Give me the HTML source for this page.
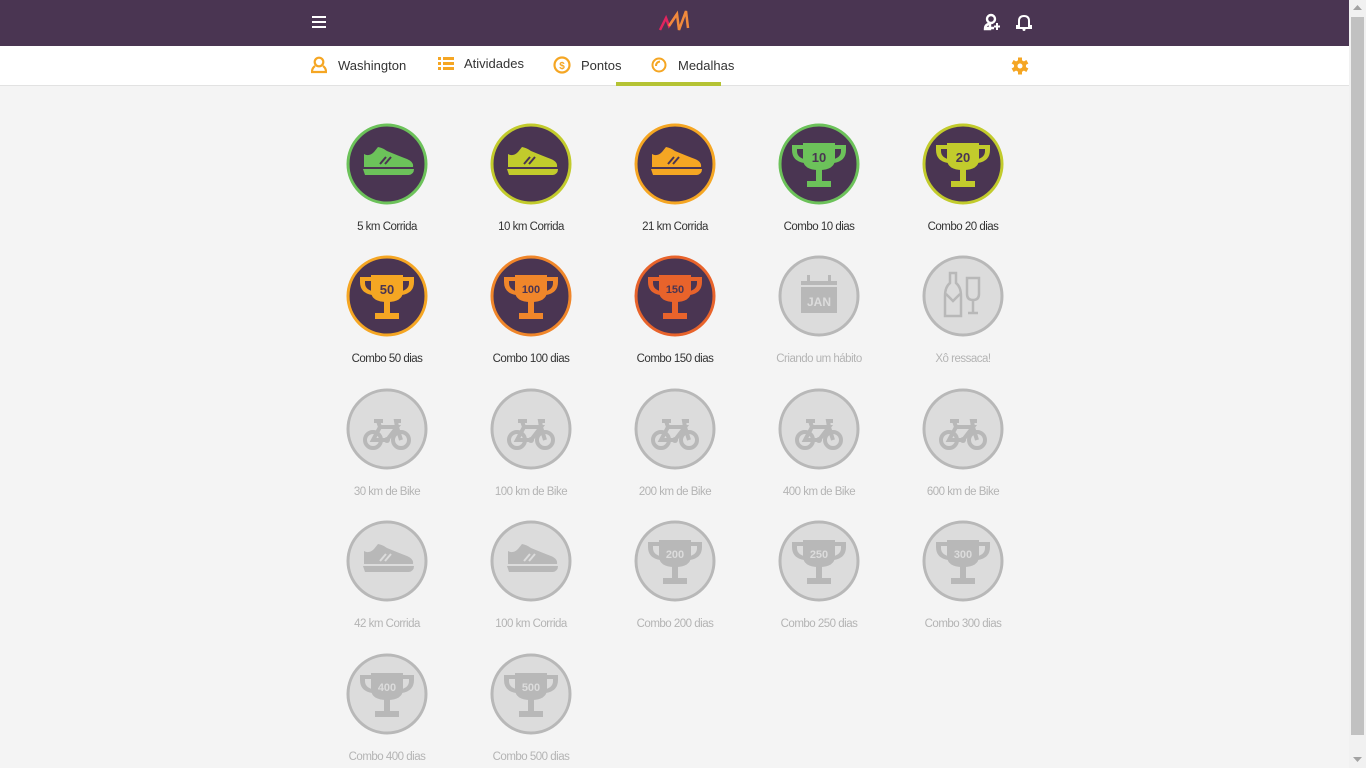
<!DOCTYPE html>
<html><head><meta charset="utf-8"><style>
*{margin:0;padding:0;box-sizing:border-box}
body{width:1366px;height:768px;overflow:hidden;background:#f4f4f4;font-family:"Liberation Sans",sans-serif;position:relative}
.hdr{position:absolute;left:0;top:0;width:1349px;height:46px;background:#4a3552}
.nav{position:absolute;left:0;top:46px;width:1349px;height:40px;background:#fff;border-bottom:1px solid #e2e2e2}
.ni{position:absolute;top:12px;font-size:13px;color:#333}
.sb{position:absolute;left:1349px;top:0;width:17px;height:768px;background:#f1f1f1}
.th{position:absolute;left:1351px;top:17px;width:13px;height:718px;background:#c1c1c1}
.m{position:absolute;width:144px;text-align:center}
.m svg{display:block;margin:0 auto}
.m div{font-size:11.5px;letter-spacing:-0.5px;color:#333;margin-top:16px}
.m.g div{color:#b4b4b4}
</style></head><body>
<svg width="0" height="0" style="position:absolute">
<defs>
<g id="shoe"><path d="M17 43 L17 30 Q22 33 27 28 L31 23 Q36 24 40 27 Q52 32 60 35 Q67 38 66 43 Z"/><path d="M16 45 L67 45 Q67 50 62 51 L18 51 Z"/></g>
<g id="cup"><path d="M24 19 H56 V35 Q56 46 40 46 Q24 46 24 35 Z"/><path d="M24 21 H13 V26 Q13 37 25 39 V35 Q18 33 18 27 V25 H24 Z"/><path d="M56 21 H67 V26 Q67 37 55 39 V35 Q62 33 62 27 V25 H56 Z"/><rect x="37" y="45" width="6" height="13"/><rect x="28" y="57" width="24" height="6"/></g>
<g id="bike" fill="none" stroke="#b8b8b8" stroke-width="4"><circle cx="26" cy="51" r="8"/><circle cx="54" cy="51" r="8"/><path d="M26 51 L33 38 H50 L40 51 Z M33 38 L31 32 M27 32 H36 M50 38 L54 51 M50 38 L49 32 H54"/><circle cx="40" cy="51" r="3" stroke="none" fill="#b8b8b8"/></g>
</defs></svg>
<div class="hdr">
<svg style="position:absolute;left:312px;top:16px" width="14" height="12"><rect y="0" width="14" height="2" fill="#fff"/><rect y="5" width="14" height="2" fill="#fff"/><rect y="10" width="14" height="2" fill="#fff"/></svg>
<svg style="position:absolute;left:657px;top:8px" width="36" height="26"><path d="M3 22 L9 10 L12 18 L20 6" stroke="#e0245e" stroke-width="2.5" fill="none"/><path d="M12 18 L20 6 L22 22 L29 3 L31 20" stroke="#f08a3c" stroke-width="2.5" fill="none"/></svg>
<svg style="position:absolute;left:983px;top:13px" width="18" height="18"><circle cx="8" cy="6" r="4" stroke="#fff" stroke-width="2.4" fill="none"/><path d="M2 16 Q2 11 7 11 L7 16 Z M2 15 H11" stroke="#fff" stroke-width="2.4" fill="none"/><path d="M14 10 V17 M11 13.5 H17" stroke="#fff" stroke-width="2"/></svg>
<svg style="position:absolute;left:1016px;top:13px" width="16" height="18"><path d="M3 13 V8 Q3 3 8 3 Q13 3 13 8 V13 H15 V15 H1 V13 Z" stroke="#fff" stroke-width="2" fill="none"/><circle cx="8" cy="16.5" r="1.5" fill="#fff"/></svg>
</div>
<div class="nav">
<svg style="position:absolute;left:311px;top:10px" width="16" height="18"><circle cx="8" cy="6" r="4.3" stroke="#f5a623" stroke-width="2.2" fill="none"/><path d="M4 10 Q1 12 1 16 H15 Q15 12 12 10" stroke="#f5a623" stroke-width="2.2" fill="none"/></svg>
<span class="ni" style="left:338px">Washington</span>
<svg style="position:absolute;left:438px;top:11px" width="16" height="14"><g fill="#f5a623"><rect x="0" y="0" width="3" height="3"/><rect x="5" y="0" width="11" height="3"/><rect x="0" y="5" width="3" height="3"/><rect x="5" y="5" width="11" height="3"/><rect x="0" y="10" width="3" height="3"/><rect x="5" y="10" width="11" height="3"/></g></svg>
<span class="ni" style="left:464px;top:10px">Atividades</span>
<svg style="position:absolute;left:553px;top:10px" width="18" height="18"><circle cx="9" cy="9" r="7.5" stroke="#f5a623" stroke-width="2.2" fill="none"/><text x="9" y="13" font-size="10" font-weight="bold" fill="#f5a623" text-anchor="middle" font-family="Liberation Sans">$</text></svg>
<span class="ni" style="left:581px">Pontos</span>
<svg style="position:absolute;left:651px;top:11px" width="16" height="16"><circle cx="8" cy="8" r="6.5" stroke="#f5a623" stroke-width="2" fill="none"/><path d="M5 9 Q5 5 9 4.5" stroke="#f5a623" stroke-width="2" fill="none"/></svg>
<span class="ni" style="left:678px">Medalhas</span>
<div style="position:absolute;left:616px;top:36px;width:105px;height:4px;background:#b5c334"></div>
<svg style="position:absolute;left:1011px;top:11px" width="18" height="18"><g fill="#f5a623" transform="translate(9 9)"><circle r="6"/><rect x="-2" y="-8.5" width="4" height="17"/><rect x="-2" y="-8.5" width="4" height="17" transform="rotate(60)"/><rect x="-2" y="-8.5" width="4" height="17" transform="rotate(120)"/></g><circle cx="9" cy="9" r="2.5" fill="#fff"/></svg>
</div>

<div class="m" style="left:315px;top:123px"><svg width="82" height="82" viewBox="-1 -1 82 82"><circle cx="40" cy="40" r="39" fill="#4a3552" stroke="#6cc25a" stroke-width="3"/><use href="#shoe" fill="#6cc25a"/><path d="M33 40 L39 33 M38 40 L44 33" stroke="#4a3552" stroke-width="2"/></svg><div>5 km Corrida</div></div>
<div class="m" style="left:459px;top:123px"><svg width="82" height="82" viewBox="-1 -1 82 82"><circle cx="40" cy="40" r="39" fill="#4a3552" stroke="#c2cb2c" stroke-width="3"/><use href="#shoe" fill="#c2cb2c"/><path d="M33 40 L39 33 M38 40 L44 33" stroke="#4a3552" stroke-width="2"/></svg><div>10 km Corrida</div></div>
<div class="m" style="left:603px;top:123px"><svg width="82" height="82" viewBox="-1 -1 82 82"><circle cx="40" cy="40" r="39" fill="#4a3552" stroke="#f5a623" stroke-width="3"/><use href="#shoe" fill="#f5a623"/><path d="M33 40 L39 33 M38 40 L44 33" stroke="#4a3552" stroke-width="2"/></svg><div>21 km Corrida</div></div>
<div class="m" style="left:747px;top:123px"><svg width="82" height="82" viewBox="-1 -1 82 82"><circle cx="40" cy="40" r="39" fill="#4a3552" stroke="#6cc25a" stroke-width="3"/><use href="#cup" fill="#6cc25a"/><text x="40" y="38" font-size="13" font-weight="bold" fill="#4a3552" text-anchor="middle">10</text></svg><div>Combo 10 dias</div></div>
<div class="m" style="left:891px;top:123px"><svg width="82" height="82" viewBox="-1 -1 82 82"><circle cx="40" cy="40" r="39" fill="#4a3552" stroke="#c2cb2c" stroke-width="3"/><use href="#cup" fill="#c2cb2c"/><text x="40" y="38" font-size="13" font-weight="bold" fill="#4a3552" text-anchor="middle">20</text></svg><div>Combo 20 dias</div></div>

<div class="m" style="left:315px;top:255px"><svg width="82" height="82" viewBox="-1 -1 82 82"><circle cx="40" cy="40" r="39" fill="#4a3552" stroke="#f5a623" stroke-width="3"/><use href="#cup" fill="#f5a623"/><text x="40" y="38" font-size="13" font-weight="bold" fill="#4a3552" text-anchor="middle">50</text></svg><div>Combo 50 dias</div></div>
<div class="m" style="left:459px;top:255px"><svg width="82" height="82" viewBox="-1 -1 82 82"><circle cx="40" cy="40" r="39" fill="#4a3552" stroke="#f0862a" stroke-width="3"/><use href="#cup" fill="#f0862a"/><text x="40" y="37" font-size="11" font-weight="bold" fill="#4a3552" text-anchor="middle">100</text></svg><div>Combo 100 dias</div></div>
<div class="m" style="left:603px;top:255px"><svg width="82" height="82" viewBox="-1 -1 82 82"><circle cx="40" cy="40" r="39" fill="#4a3552" stroke="#e8632b" stroke-width="3"/><use href="#cup" fill="#e8632b"/><text x="40" y="37" font-size="11" font-weight="bold" fill="#4a3552" text-anchor="middle">150</text></svg><div>Combo 150 dias</div></div>
<div class="m g" style="left:747px;top:255px"><svg width="82" height="82" viewBox="-1 -1 82 82"><circle cx="40" cy="40" r="39" fill="#dcdcdc" stroke="#b8b8b8" stroke-width="3"/><rect x="22" y="25" width="36" height="32" fill="#b8b8b8"/><rect x="28" y="19" width="3" height="8" fill="#b8b8b8"/><rect x="49" y="19" width="3" height="8" fill="#b8b8b8"/><rect x="22" y="29" width="36" height="2" fill="#dcdcdc"/><text x="40" y="50" font-size="12" font-weight="bold" fill="#dcdcdc" text-anchor="middle">JAN</text></svg><div>Criando um hábito</div></div>
<div class="m g" style="left:891px;top:255px"><svg width="82" height="82" viewBox="-1 -1 82 82"><circle cx="40" cy="40" r="39" fill="#dcdcdc" stroke="#b8b8b8" stroke-width="3"/><path d="M27 17 H33 V27 Q38 31 38 40 V60 H22 V40 Q22 31 27 27 Z M23 38 L30 45 L37 38" stroke="#b8b8b8" stroke-width="2.5" fill="none"/><path d="M44 22 H56 V38 Q56 44 50 44 Q44 44 44 38 Z M50 44 V56 M45 57 H55" stroke="#b8b8b8" stroke-width="2.5" fill="none"/></svg><div>Xô ressaca!</div></div>

<div class="m g" style="left:315px;top:388px"><svg width="82" height="82" viewBox="-1 -1 82 82"><circle cx="40" cy="40" r="39" fill="#dcdcdc" stroke="#b8b8b8" stroke-width="3"/><use href="#bike"/></svg><div>30 km de Bike</div></div>
<div class="m g" style="left:459px;top:388px"><svg width="82" height="82" viewBox="-1 -1 82 82"><circle cx="40" cy="40" r="39" fill="#dcdcdc" stroke="#b8b8b8" stroke-width="3"/><use href="#bike"/></svg><div>100 km de Bike</div></div>
<div class="m g" style="left:603px;top:388px"><svg width="82" height="82" viewBox="-1 -1 82 82"><circle cx="40" cy="40" r="39" fill="#dcdcdc" stroke="#b8b8b8" stroke-width="3"/><use href="#bike"/></svg><div>200 km de Bike</div></div>
<div class="m g" style="left:747px;top:388px"><svg width="82" height="82" viewBox="-1 -1 82 82"><circle cx="40" cy="40" r="39" fill="#dcdcdc" stroke="#b8b8b8" stroke-width="3"/><use href="#bike"/></svg><div>400 km de Bike</div></div>
<div class="m g" style="left:891px;top:388px"><svg width="82" height="82" viewBox="-1 -1 82 82"><circle cx="40" cy="40" r="39" fill="#dcdcdc" stroke="#b8b8b8" stroke-width="3"/><use href="#bike"/></svg><div>600 km de Bike</div></div>

<div class="m g" style="left:315px;top:520px"><svg width="82" height="82" viewBox="-1 -1 82 82"><circle cx="40" cy="40" r="39" fill="#dcdcdc" stroke="#b8b8b8" stroke-width="3"/><use href="#shoe" fill="#b8b8b8"/><path d="M33 40 L39 33 M38 40 L44 33" stroke="#dcdcdc" stroke-width="2"/></svg><div>42 km Corrida</div></div>
<div class="m g" style="left:459px;top:520px"><svg width="82" height="82" viewBox="-1 -1 82 82"><circle cx="40" cy="40" r="39" fill="#dcdcdc" stroke="#b8b8b8" stroke-width="3"/><use href="#shoe" fill="#b8b8b8"/><path d="M33 40 L39 33 M38 40 L44 33" stroke="#dcdcdc" stroke-width="2"/></svg><div>100 km Corrida</div></div>
<div class="m g" style="left:603px;top:520px"><svg width="82" height="82" viewBox="-1 -1 82 82"><circle cx="40" cy="40" r="39" fill="#dcdcdc" stroke="#b8b8b8" stroke-width="3"/><use href="#cup" fill="#b8b8b8"/><text x="40" y="37" font-size="11" font-weight="bold" fill="#dcdcdc" text-anchor="middle">200</text></svg><div>Combo 200 dias</div></div>
<div class="m g" style="left:747px;top:520px"><svg width="82" height="82" viewBox="-1 -1 82 82"><circle cx="40" cy="40" r="39" fill="#dcdcdc" stroke="#b8b8b8" stroke-width="3"/><use href="#cup" fill="#b8b8b8"/><text x="40" y="37" font-size="11" font-weight="bold" fill="#dcdcdc" text-anchor="middle">250</text></svg><div>Combo 250 dias</div></div>
<div class="m g" style="left:891px;top:520px"><svg width="82" height="82" viewBox="-1 -1 82 82"><circle cx="40" cy="40" r="39" fill="#dcdcdc" stroke="#b8b8b8" stroke-width="3"/><use href="#cup" fill="#b8b8b8"/><text x="40" y="37" font-size="11" font-weight="bold" fill="#dcdcdc" text-anchor="middle">300</text></svg><div>Combo 300 dias</div></div>

<div class="m g" style="left:315px;top:653px"><svg width="82" height="82" viewBox="-1 -1 82 82"><circle cx="40" cy="40" r="39" fill="#dcdcdc" stroke="#b8b8b8" stroke-width="3"/><use href="#cup" fill="#b8b8b8"/><text x="40" y="37" font-size="11" font-weight="bold" fill="#dcdcdc" text-anchor="middle">400</text></svg><div>Combo 400 dias</div></div>
<div class="m g" style="left:459px;top:653px"><svg width="82" height="82" viewBox="-1 -1 82 82"><circle cx="40" cy="40" r="39" fill="#dcdcdc" stroke="#b8b8b8" stroke-width="3"/><use href="#cup" fill="#b8b8b8"/><text x="40" y="37" font-size="11" font-weight="bold" fill="#dcdcdc" text-anchor="middle">500</text></svg><div>Combo 500 dias</div></div>

<div class="sb"></div><div class="th"></div>
<svg style="position:absolute;left:1353px;top:5px" width="9" height="6"><path d="M0 5 L4.5 0 L9 5 Z" fill="#a3a3a3"/></svg>
<svg style="position:absolute;left:1353px;top:757px" width="9" height="6"><path d="M0 0 L4.5 5 L9 0 Z" fill="#a3a3a3"/></svg>
</body></html>
